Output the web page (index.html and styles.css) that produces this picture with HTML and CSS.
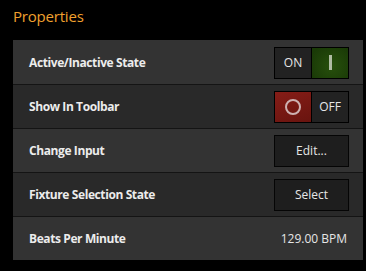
FILE: index.html
```html
<!DOCTYPE html>
<html lang="en">
<head>
  <meta charset="UTF-8" />
  <title>Properties</title>
  <link rel="stylesheet" href="styles.css">
</head>
<body>
  <h1 class="title">Properties</h1>
  <div class="panel">
    <div class="row">
      <span class="label">Active/Inactive State</span>
      <div class="toggle">
        <span class="half text">ON</span>
        <span class="half on"><span class="bar"></span></span>
      </div>
    </div>
    <div class="row">
      <span class="label">Show In Toolbar</span>
      <div class="toggle">
        <span class="half off"><span class="ring"></span></span>
        <span class="half text">OFF</span>
      </div>
    </div>
    <div class="row">
      <span class="label">Change Input</span>
      <button class="btn">Edit...</button>
    </div>
    <div class="row">
      <span class="label">Fixture Selection State</span>
      <button class="btn">Select</button>
    </div>
    <div class="row">
      <span class="label">Beats Per Minute</span>
      <span class="value">129.00 BPM</span>
    </div>
  </div>
</body>
</html>
```

FILE: styles.css
```css
* {
  box-sizing: border-box;
  margin: 0;
  padding: 0;
  font-family: 'Open Sans', sans-serif;
}

body {
  background-color: #000;
  width: 366px;
  height: 271px;
  overflow: hidden;
}

.title {
  height: 40px;
  padding-left: 13px;
  line-height: 32px;
  font-size: 15px;
  font-weight: 400;
  letter-spacing: -0.2px;
  color: #f0a02e;
}

.panel {
  margin-left: 13px;
  width: 350px;
  border-top: 1px solid #333;
}

.row {
  height: 44px;
  display: flex;
  align-items: center;
  justify-content: space-between;
  padding: 0 14px 0 16px;
  background-color: #333;
  border-bottom: 1px solid #141414;
}

.row:nth-child(even) {
  background-color: #292929;
}

.row:last-child {
  height: 43px;
  border-bottom: none;
}

.label {
  color: #ececec;
  font-size: 12px;
  font-weight: 700;
  letter-spacing: -0.4px;
}

.toggle {
  display: flex;
  width: 75px;
  height: 32px;
  border: 1px solid #000;
  background-color: #000;
  gap: 1px;
}

.half {
  flex: 1;
  display: flex;
  align-items: center;
  justify-content: center;
}

.half.text {
  background-color: #222;
  color: #e6e6e6;
  font-size: 12px;
}

.half.on {
  background: radial-gradient(circle at 55% 60%, #27500c 0%, #1a3a07 85%);
}

.bar {
  width: 3px;
  height: 15px;
  background-color: #b0bca4;
}

.half.off {
  background: linear-gradient(160deg, #861d17 0%, #69140f 100%);
}

.ring {
  width: 16px;
  height: 16px;
  border: 2px solid #cdb1b1;
  border-radius: 50%;
}

.btn {
  width: 75px;
  height: 32px;
  background-color: #1e1e1e;
  border: 1px solid #050505;
  color: #e6e6e6;
  font-size: 12px;
}

.value {
  color: #e6e6e6;
  font-size: 12px;
  padding-right: 2px;
}
```
